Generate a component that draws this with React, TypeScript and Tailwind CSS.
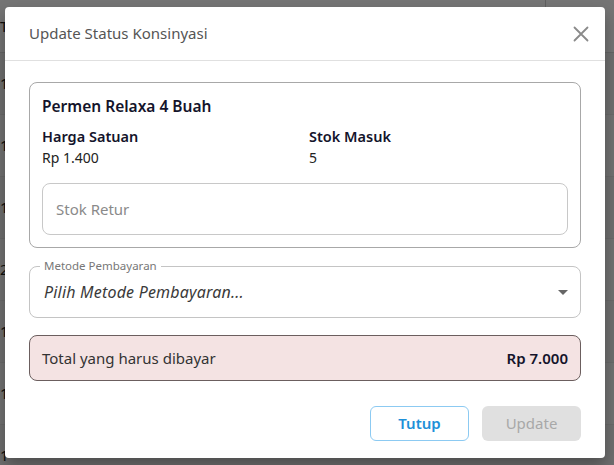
import * as React from "react";

const rows = ["1", "1", "1", "2", "1", "1", "1"];

function CloseIcon() {
  return (
    <svg width="16" height="16" viewBox="0 0 16 16" className="text-[#8a8a8a]">
      <path d="M1.5 1.5L14.5 14.5M14.5 1.5L1.5 14.5" stroke="currentColor" strokeWidth="1.8" strokeLinecap="round" />
    </svg>
  );
}

export default function App() {
  return (
    <div className="relative h-[465px] w-[614px] overflow-hidden bg-white font-['Noto_Sans',sans-serif]">
      {/* page behind the dialog */}
      <div className="flex flex-col">
        <div className="flex h-[53px] items-center border-b border-[#dcdcdc] bg-white">
          <div className="w-[213px] border-r border-[#cfcfcf] text-[15px] text-[#222]">T</div>
          <div className="h-full w-[333px] border-r border-[#cfcfcf]" />
        </div>
        {rows.map((r, i) => (
          <div
            key={i}
            className={
              i % 2 === 0
                ? "flex h-[62px] items-center border-b border-[#e6e6e6] bg-[#f1f1f1]"
                : "flex h-[62px] items-center border-b border-[#e6e6e6] bg-[#f9f9f9]"
            }
          >
            <span className="text-[15px] text-[#222]">{r}</span>
          </div>
        ))}
      </div>

      <div className="absolute inset-0 bg-black/[0.54]" />

      <div className="absolute left-[5px] top-[7px] w-[600px] rounded-[4px] bg-white shadow-[0_8px_16px_rgba(0,0,0,0.3)]">
        <div className="flex h-[54px] items-center justify-between border-b border-[#e0e0e0] pl-6 pr-[16px]">
          <span className="text-[15px] text-[#555]">Update Status Konsinyasi</span>
          <CloseIcon />
        </div>

        <div className="px-6 pt-[21px] pb-[17px]">
          <div className="rounded-[8px] border border-[#a8a8a8] p-3">
            <div className="text-[15.5px] leading-[22px] font-semibold text-[#14142b]">Permen Relaxa 4 Buah</div>
            <div className="mt-[9px] grid grid-cols-2 gap-x-2">
              <div>
                <div className="text-[14.5px] leading-[20px] font-semibold text-[#14142b]">Harga Satuan</div>
                <div className="mt-[2px] text-[14px] leading-[20px] text-[#222]">Rp 1.400</div>
              </div>
              <div>
                <div className="text-[14.5px] leading-[20px] font-semibold text-[#14142b]">Stok Masuk</div>
                <div className="mt-[2px] text-[14px] leading-[20px] text-[#222]">5</div>
              </div>
            </div>
            <div className="mt-[15px] flex h-[52px] items-center rounded-[8px] border border-[#c8c8c8] px-[13px]">
              <span className="text-[15px] text-[#8a8a8a]">Stok Retur</span>
            </div>
          </div>

          <div className="relative mt-[18px] flex h-[52px] items-center justify-between rounded-[8px] border border-[#c4c4c4] pl-[14px] pr-[12px]">
            <span className="absolute -top-[8px] left-[10px] bg-white px-[4px] text-[11.5px] leading-[14px] text-[#777]">
              Metode Pembayaran
            </span>
            <span className="text-[16px] italic tracking-[0.2px] text-[#3a3a3a]">Pilih Metode Pembayaran...</span>
            <svg width="10" height="5" viewBox="0 0 10 5" className="text-[#666]">
              <path d="M0 0L10 0L5 5Z" fill="currentColor" />
            </svg>
          </div>

          <div className="mt-[17px] flex h-[46px] items-center justify-between rounded-[8px] border border-[#6b5e5e] bg-[#f4e3e3] px-3">
            <span className="text-[15px] text-[#333]">Total yang harus dibayar</span>
            <span className="text-[15px] font-semibold text-[#14142b]">Rp 7.000</span>
          </div>

          <div className="mt-[25px] flex justify-end gap-[13px]">
            <button className="h-[35px] w-[99px] rounded-[6px] border border-[#8ccaf2] bg-white text-[15px] font-semibold text-[#1e90d8]">
              Tutup
            </button>
            <button className="h-[35px] w-[99px] rounded-[6px] bg-[#e0e0e0] text-[15px] text-[#a8a8a8]">
              Update
            </button>
          </div>
        </div>
      </div>
    </div>
  );
}
